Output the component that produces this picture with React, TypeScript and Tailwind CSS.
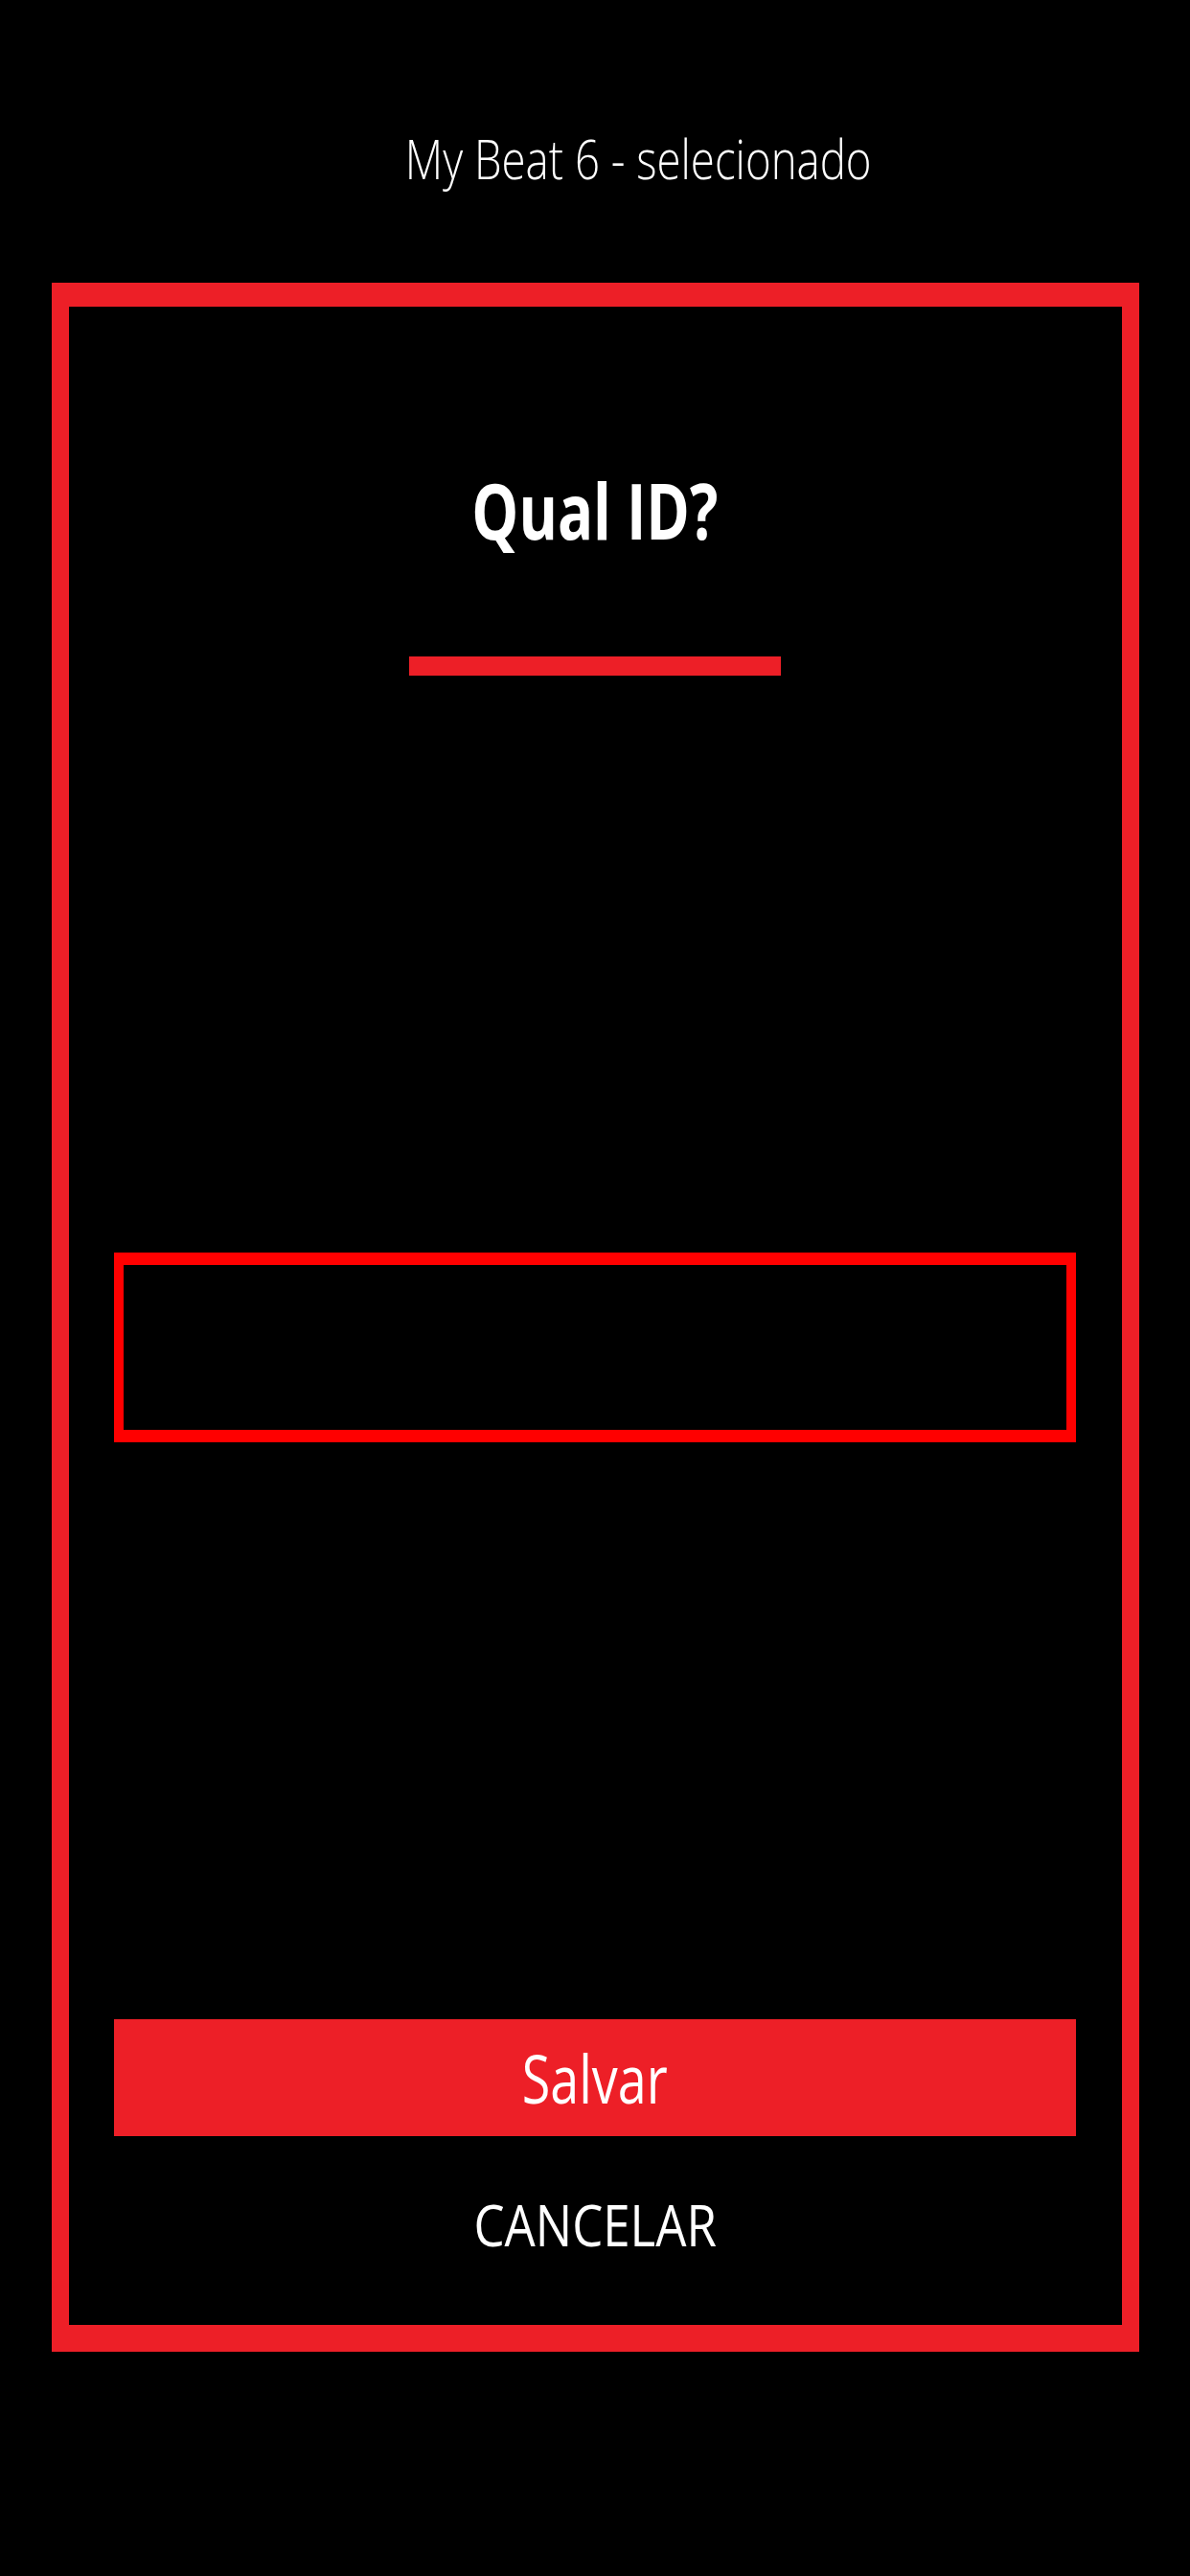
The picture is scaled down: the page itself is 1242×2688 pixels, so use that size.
import React from "react";

export default function App() {
  const font = { fontFamily: '"Open Sans", "Noto Sans", sans-serif' };
  return (
    <div className="w-[1242px] h-[2688px] bg-black flex flex-col items-center" style={font}>
      <div className="w-full flex justify-center pl-[90px] mt-[137px]">
        <div className="text-white text-[57px] leading-none font-light scale-x-[0.8] whitespace-nowrap">
          My Beat 6 - selecionado
        </div>
      </div>
      <div className="mt-[101px] w-[1135px] h-[2159px] bg-[#ed1f27] pt-[25px] px-[18px] pb-[28px] flex">
        <div className="flex-1 bg-black flex flex-col items-center shadow-[inset_0_2px_3px_rgba(0,0,0,0.6)]">
          <div className="mt-[172px] text-white text-[80px] leading-none font-bold scale-x-[0.77] whitespace-nowrap">
            Qual ID?
          </div>
          <div className="mt-[113px] w-[388px] h-[20px] bg-[#ed1f27]" />
          <div className="mt-[602px] w-[1004px] h-[198px] border-x-[10px] border-y-[13px] border-[#ff0000] bg-black" />
          <button className="mt-[602px] w-[1004px] h-[122px] bg-[#ed1f27] flex items-center justify-center">
            <span className="text-white text-[70px] leading-none scale-x-[0.77] whitespace-nowrap">Salvar</span>
          </button>
          <div className="mt-[62px] text-white text-[60px] leading-none scale-x-[0.85] whitespace-nowrap">
            CANCELAR
          </div>
        </div>
      </div>
    </div>
  );
}
